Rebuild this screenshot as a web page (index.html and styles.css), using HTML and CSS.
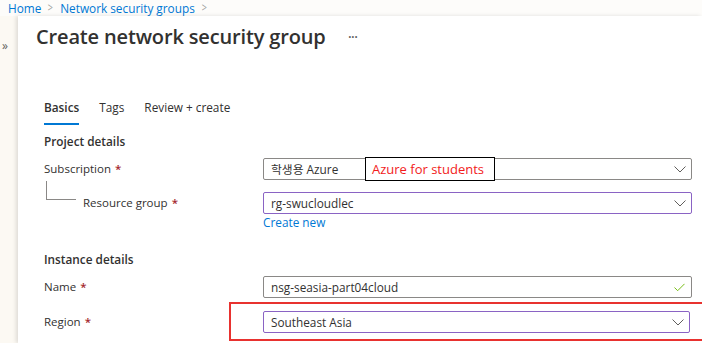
FILE: index.html
```html
<!DOCTYPE html>
<html>
<head>
<meta charset="utf-8">
<link rel="stylesheet" href="styles.css">
</head>
<body>
<div class="page">
  <nav class="breadcrumb">
    <a class="crumb">Home</a><span class="sep">&gt;</span><a class="crumb">Network security groups</a><span class="sep">&gt;</span>
  </nav>
  <div class="main">
    <div class="rail"><span class="expand">»</span></div>
    <div class="panel">
      <div class="title-row">
        <h1 class="title">Create network security group</h1>
        <span class="more">···</span>
      </div>
      <div class="tabs">
        <span class="tab active">Basics</span>
        <span class="tab">Tags</span>
        <span class="tab">Review + create</span>
      </div>
      <h2 class="section">Project details</h2>
      <div class="row row-sub">
        <label class="label">Subscription <span class="req">*</span></label>
        <div class="field">
          <div class="select">학생용 Azure<svg class="chev" viewBox="0 0 12 7"><path d="M0.5 0.5 L6 6 L11.5 0.5" /></svg></div>
          <div class="note">Azure for students</div>
        </div>
      </div>
      <div class="row row-rg">
        <label class="label sub">
          <span class="tree"></span>Resource group <span class="req">*</span>
        </label>
        <div class="field">
          <div class="select focus">rg-swucloudlec<svg class="chev" viewBox="0 0 12 7"><path d="M0.5 0.5 L6 6 L11.5 0.5" /></svg></div>
          <a class="link">Create new</a>
        </div>
      </div>
      <h2 class="section section2">Instance details</h2>
      <div class="row row-name">
        <label class="label">Name <span class="req">*</span></label>
        <div class="field">
          <div class="select">nsg-seasia-part04cloud<svg class="check" viewBox="0 0 12 9"><path d="M0.5 4.5 L4 8 L11.5 0.5" /></svg></div>
        </div>
      </div>
      <div class="row row-region">
        <label class="label">Region <span class="req">*</span></label>
        <div class="field">
          <div class="highlight">
            <div class="select focus">Southeast Asia<svg class="chev" viewBox="0 0 12 7"><path d="M0.5 0.5 L6 6 L11.5 0.5" /></svg></div>
          </div>
        </div>
      </div>
    </div>
  </div>
</div>
</body>
</html>
```
FILE: styles.css
```css
* { box-sizing: border-box; }
html, body { margin: 0; padding: 0; }
body {
  width: 702px;
  height: 343px;
  overflow: hidden;
  background: #fcf9f3;
  font-family: "Open Sans", "Noto Sans CJK KR", sans-serif;
  color: #323130;
}
.page { display: flex; flex-direction: column; height: 343px; }
.breadcrumb {
  height: 16px;
  padding-left: 8px;
  font-size: 11.8px;
  line-height: 16px;
  display: flex;
  align-items: center;
  background: #fdfcfa;
}
.crumb { color: #0078d4; }
.sep { color: #a19f9d; margin: 0 6px; font-size: 12px; transform: scaleX(0.75); display: inline-block; }
.main { display: flex; flex: 1; min-height: 0; }
.rail { width: 18px; position: relative; padding-top: 17px; padding-left: 2px; }
.expand { font-size: 12px; color: #605e5c; line-height: 14px; }
.panel {
  flex: 1;
  background: #fff;
  box-shadow: -2px 0 4px rgba(0,0,0,0.12);
  padding-left: 18px;
  overflow: hidden;
}
.title-row { display: flex; align-items: center; height: 44px; padding-bottom: 3px; }
.title {
  margin: 0;
  font-size: 20px;
  font-weight: 600;
  color: #323130;
  letter-spacing: -0.15px;
}
.more { margin-left: 22px; font-size: 16px; color: #605e5c; letter-spacing: -1px; line-height: 16px; }
.tabs { display: flex; gap: 20px; margin-top: 39px; padding-left: 8px; height: 22px; }
.tab { font-size: 11.8px; line-height: 16px; position: relative; }
.tab.active { font-weight: 600; }
.tab.active::after {
  content: "";
  position: absolute;
  left: 0; right: 0; bottom: -4px;
  height: 2px;
  background: #0078d4;
}
.section { margin: 12px 0 0 8px; font-size: 11.8px; font-weight: 600; line-height: 16px; }
.section2 { margin-top: 22px; }
.row {
  display: grid;
  grid-template-columns: 219px 429px;
  align-items: start;
  margin-left: 8px;
  margin-top: 10px;
}
.row-sub { margin-top: 9px; }
.row-rg { margin-top: 12px; }
.row-name { margin-top: 9px; }
.label { font-size: 11.5px; line-height: 21px; display: flex; align-items: center; }
.label.sub { padding-left: 39px; position: relative; }
.req { color: #a4262c; margin-left: 4px; font-weight: 600; }
.tree {
  position: absolute;
  left: 2px; top: -11px;
  width: 30px; height: 19px;
  border-left: 1px solid #8a8886;
  border-bottom: 1px solid #8a8886;
}
.field { position: relative; }
.select {
  height: 22px;
  border: 1px solid #8a8886;
  border-radius: 2px;
  font-size: 11.8px;
  line-height: 20px;
  padding-left: 7px;
  display: flex;
  align-items: center;
  justify-content: space-between;
  padding-right: 5px;
  background: #fff;
}
.select.focus { border-color: #8a63c4; }
.chev { width: 12px; height: 7px; fill: none; stroke: #605e5c; stroke-width: 1; }
.check { width: 11px; height: 9px; fill: none; stroke: #6bb700; stroke-width: 1; margin-right: 1px; }
.link { display: block; color: #0078d4; font-size: 11.8px; line-height: 14px; margin-top: 1px; }
.note {
  position: absolute;
  left: 102px; top: -1px;
  width: 130px; height: 24px;
  border: 1px solid #000;
  background: #fff;
  color: #f21b1b;
  font-size: 13px;
  line-height: 22px;
  padding-left: 6px;
}
.row-region { margin-top: 4px; }
.row-region .label { margin-top: 9px; }
.highlight {
  margin-left: -34px;
  margin-right: -60px;
  border: 2px solid #e8322f;
  padding: 7px 60px 7px 32px;
  height: 39px;
}
```
